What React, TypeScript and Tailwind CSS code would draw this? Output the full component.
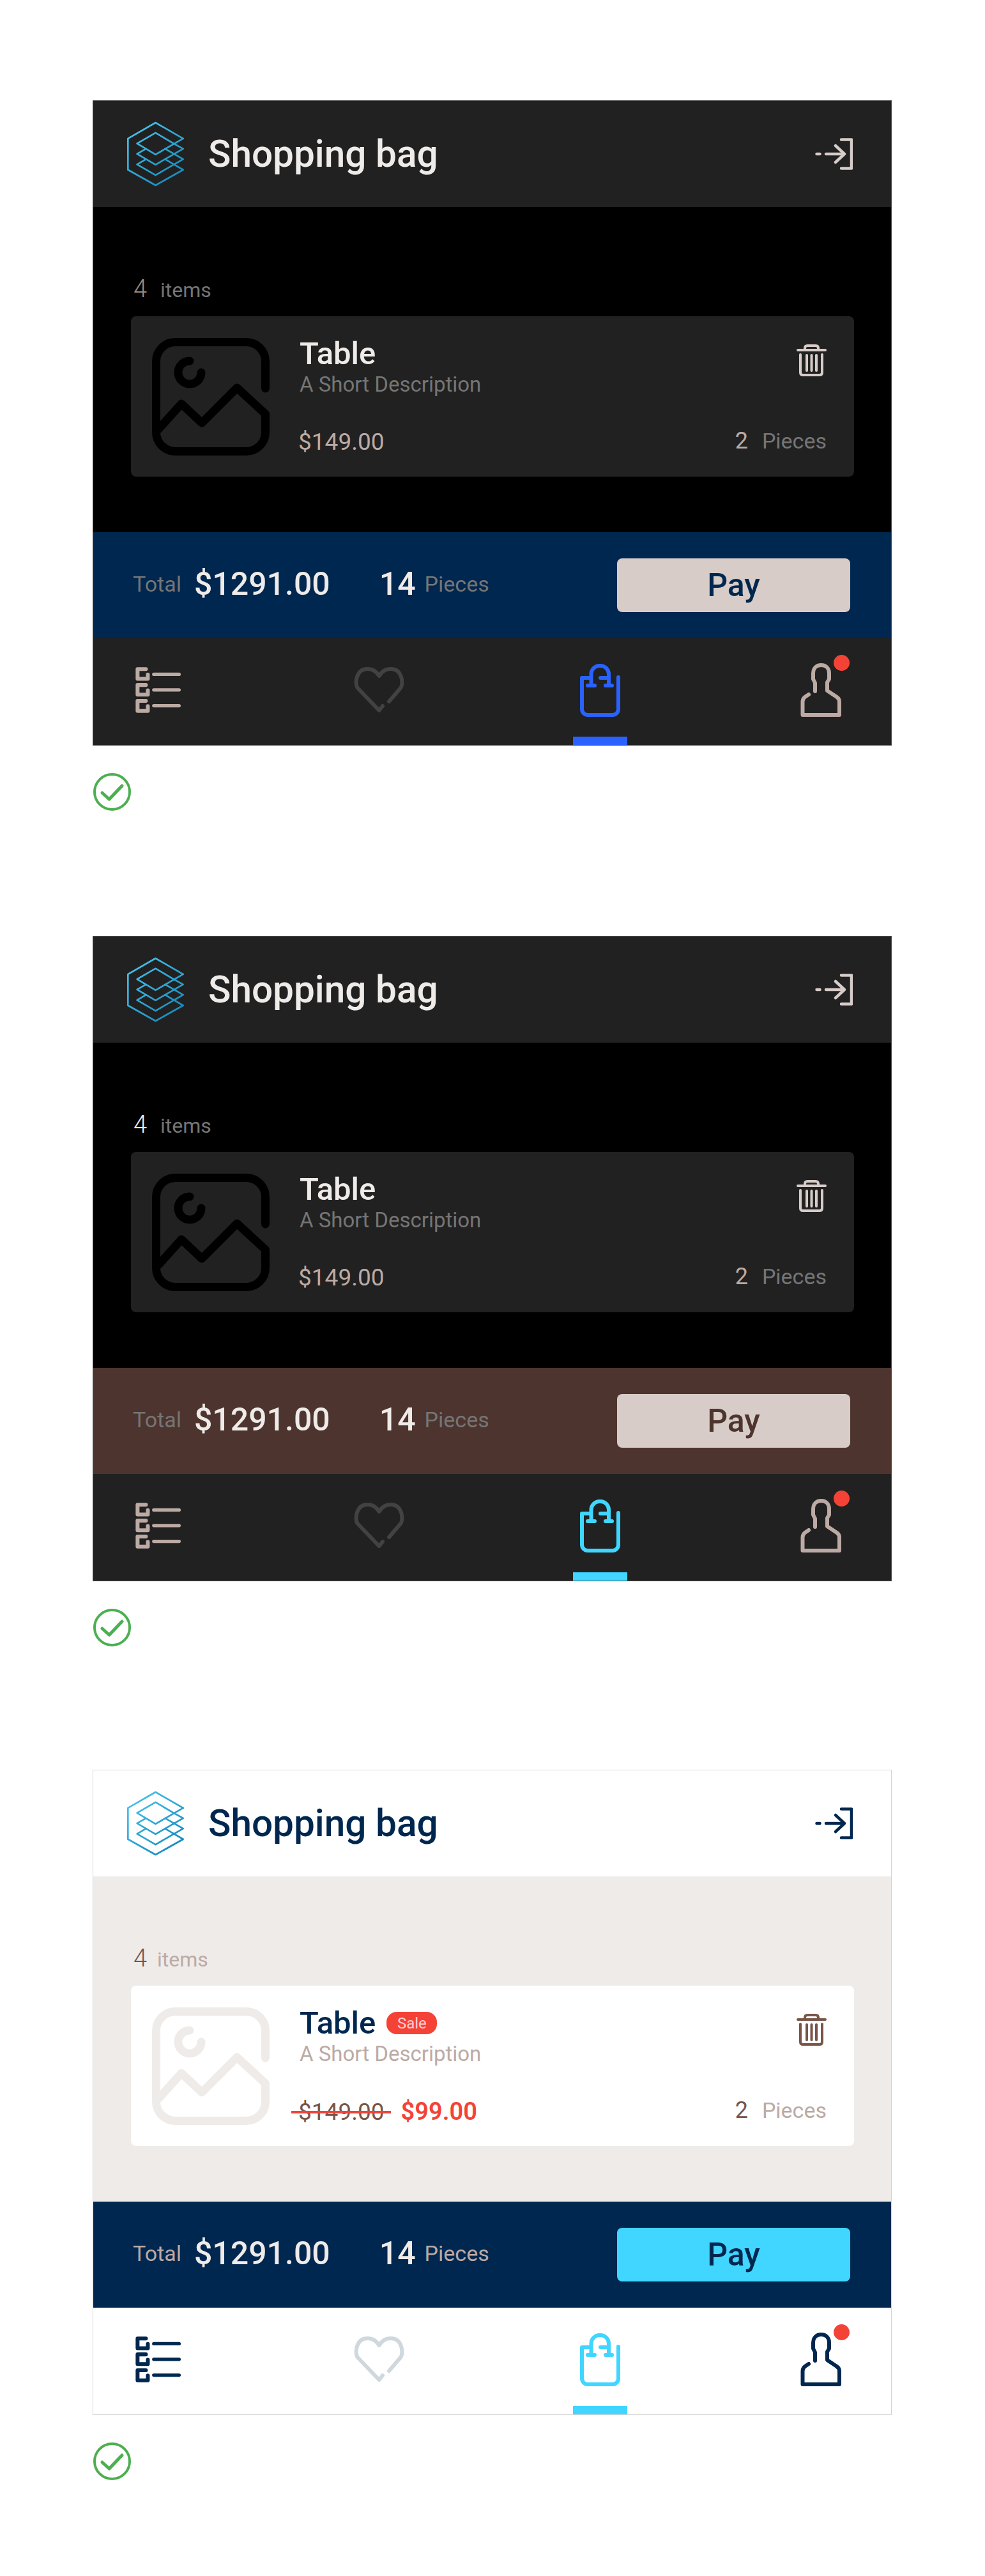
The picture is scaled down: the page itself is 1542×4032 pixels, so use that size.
import { useId } from "react"

type Theme = {
  panel: string
  header: string
  title: string
  exit: string
  body: string
  count: string
  items: string
  card: string
  placeholder: string
  name: string
  desc: string
  price: string
  qty: string
  pieces: string
  trash: string
  footer: string
  totalLabel: string
  payBg: string
  payText: string
  nav: string
  list: string
  heart: string
  bag: string
  user: string
  itemsGap: string
  sale?: boolean
}

const themes: Theme[] = [
  {
    panel: "border-[#4a4a4a]",
    header: "bg-[#212121]",
    title: "text-[#efebe9]",
    exit: "#d7ccc8",
    body: "bg-black",
    count: "text-[#a1887f]",
    items: "text-[#757575]",
    card: "bg-[#212121]",
    placeholder: "#000000",
    name: "text-[#efebe9]",
    desc: "text-[#757575]",
    price: "text-[#bcaaa4]",
    qty: "text-[#bcaaa4]",
    pieces: "text-[#757575]",
    trash: "#d7ccc8",
    footer: "bg-[#00274f]",
    totalLabel: "text-[#757575]",
    payBg: "bg-[#d7ccc8]",
    payText: "text-[#00274f]",
    nav: "bg-[#212121]",
    list: "#bcaaa4",
    heart: "#424242",
    bag: "#2962ff",
    user: "#bcaaa4",
    itemsGap: "ml-[21px]",
  },
  {
    panel: "border-[#4a4a4a]",
    header: "bg-[#212121]",
    title: "text-[#efebe9]",
    exit: "#d7ccc8",
    body: "bg-black",
    count: "text-[#efebe9]",
    items: "text-[#757575]",
    card: "bg-[#212121]",
    placeholder: "#000000",
    name: "text-[#efebe9]",
    desc: "text-[#757575]",
    price: "text-[#bcaaa4]",
    qty: "text-[#bcaaa4]",
    pieces: "text-[#757575]",
    trash: "#d7ccc8",
    footer: "bg-[#4e342e]",
    totalLabel: "text-[#757575]",
    payBg: "bg-[#d7ccc8]",
    payText: "text-[#4e342e]",
    nav: "bg-[#212121]",
    list: "#bcaaa4",
    heart: "#424242",
    bag: "#40d6ff",
    user: "#bcaaa4",
    itemsGap: "ml-[21px]",
  },
  {
    panel: "border-[#d4d4d4]",
    header: "bg-white",
    title: "text-[#00274f]",
    exit: "#00274f",
    body: "bg-[#efebe9]",
    count: "text-[#795548]",
    items: "text-[#bcaaa4]",
    card: "bg-white",
    placeholder: "#efebe9",
    name: "text-[#00274f]",
    desc: "text-[#bcaaa4]",
    price: "text-[#795548]",
    qty: "text-[#795548]",
    pieces: "text-[#bcaaa4]",
    trash: "#795548",
    footer: "bg-[#00274f]",
    totalLabel: "text-[#bcaaa4]",
    payBg: "bg-[#40d6ff]",
    payText: "text-[#00274f]",
    nav: "bg-white",
    list: "#00274f",
    heart: "#cfd8dc",
    bag: "#40d6ff",
    user: "#00274f",
    itemsGap: "ml-[16px]",
    sale: true,
  },
]

function Logo() {
  const id = useId()
  return (
    <svg width="87" height="98" viewBox="60 65 260 295" fill="none" className="overflow-visible shrink-0">
      <defs>
        <linearGradient id={id} gradientUnits="userSpaceOnUse" x1="60" y1="65" x2="320" y2="360">
          <stop offset="0" stopColor="#4fc8ee" />
          <stop offset="1" stopColor="#0f83b8" />
        </linearGradient>
      </defs>
      <g stroke={`url(#${id})`} strokeWidth="8" strokeLinejoin="round" strokeLinecap="round">
        <path d="M320 140 190 65 60 140V287L190 360 320 287 277 262" />
        <path d="M320 140 190 215 103 163 190 113 275 163 320 188 190 263 103 212 145 188" />
        <path d="M235 188 320 237 190 312 103 262 145 237" />
        <path d="M235 237 277 262" />
      </g>
    </svg>
  )
}

function ExitIcon({ color }: { color: string }) {
  return (
    <svg width="59" height="50" viewBox="0 0 59 50" fill="none" stroke={color} strokeWidth="4.5" strokeLinecap="round" strokeLinejoin="round">
      <path d="M41 2.5H57V47.5H41" />
      <path d="M17 25H45M32 12 46 25 32 38" />
      <path d="M2.5 25H7.5" />
    </svg>
  )
}

function ImagePlaceholder({ color }: { color: string }) {
  return (
    <svg width="184" height="184" viewBox="0 0 184 184" fill="none" stroke={color} strokeWidth="13" strokeLinecap="round" strokeLinejoin="round" className="shrink-0">
      <path d="M177.5 79V36.5A30 30 0 0 0 147.5 6.5H36.5A30 30 0 0 0 6.5 36.5V147.5A30 30 0 0 0 36.5 177.5H147.5A30 30 0 0 0 177.5 147.5V119L133 78 78 133 46 103 10 143" />
      <path d="M59 36A18 18 0 1 0 77 54" />
    </svg>
  )
}

function TrashIcon({ color }: { color: string }) {
  return (
    <svg width="47" height="50" viewBox="0 0 47 50" fill="none" stroke={color} strokeWidth="4" strokeLinecap="round" strokeLinejoin="round" className="shrink-0">
      <path d="M2 9H45" />
      <path d="M13 9V6Q13 2 17 2H30Q34 2 34 6V9" />
      <path d="M6 16V44Q6 48 10 48H36Q40 48 40 44V16" />
      <path d="M16 17V41M23.5 17V41M31 17V41" />
    </svg>
  )
}

function ListIcon({ color }: { color: string }) {
  return (
    <svg width="71" height="72" viewBox="63 73 212 215" fill="none" stroke={color} strokeLinecap="round" strokeLinejoin="round">
      <g strokeWidth="18">
        <path d="M112 83H73V128H121V108" />
        <path d="M112 157H73V202H121V182" />
        <path d="M112 231H73V278H121V256" />
      </g>
      <g strokeWidth="16">
        <path d="M149 107H267M149 180H267M149 254H267" />
      </g>
    </svg>
  )
}

function HeartIcon({ color }: { color: string }) {
  return (
    <svg width="79" height="71" viewBox="0 0 79 71" fill="none" stroke={color} strokeWidth="6" strokeLinecap="round" strokeLinejoin="round">
      <path d="M55 54 73 33C78 27 76 3 58 3 49 3 43 8 39.5 14 36 8 30 3 21 3 3 3 1 27 6 33L39.5 68 45 61" />
    </svg>
  )
}

function BagIcon({ color }: { color: string }) {
  return (
    <svg width="63" height="84" viewBox="0 0 63 84" fill="none" stroke={color} strokeWidth="6" strokeLinecap="round" strokeLinejoin="round">
      <path d="M15 23H3V72A9 9 0 0 0 12 81H51A9 9 0 0 0 60 72V22" />
      <path d="M17.5 35V17A13 13 0 0 1 30.5 4H32A13 13 0 0 1 45 17V35" />
      <path d="M12 35H23M40 35H50M32 23H45" />
    </svg>
  )
}

function UserIcon({ color }: { color: string }) {
  return (
    <svg width="64" height="84" viewBox="0 0 64 84" fill="none" stroke={color} strokeWidth="6" strokeLinecap="round" strokeLinejoin="round">
      <path d="M13 49 7 53Q3.5 56 3.5 60V81H61V60Q61 56 57 53L42 43V30L45 25V16C45 8 40 3 32.5 3 25 3 20 8 20 16V25L23 31V44" />
    </svg>
  )
}

function CheckIcon() {
  return (
    <svg width="59" height="59" viewBox="0 0 59 59" fill="none" stroke="#4caf50" strokeLinecap="round" strokeLinejoin="round">
      <circle cx="29.5" cy="29.5" r="27.5" strokeWidth="4" />
      <path d="M14 31 25 41 45 20" strokeWidth="5" />
    </svg>
  )
}

function NavItem({ active, children }: { active?: string; children: React.ReactNode }) {
  return (
    <div className="relative w-[85px] h-full flex items-center justify-center pb-[6px]">
      {children}
      {active && <div className="absolute left-0 right-0 bottom-0 h-[13px]" style={{ backgroundColor: active }} />}
    </div>
  )
}

function Panel({ t }: { t: Theme }) {
  return (
    <div className="last:-mt-[3px]">
      <div className={`w-[1251px] h-[1010px] border flex flex-col ${t.panel}`}>
        {/* Header */}
        <div className={`h-[166px] shrink-0 flex items-center justify-between pl-[54px] pr-[60px] ${t.header}`}>
          <div className="flex items-center gap-[39px]">
            <Logo />
            <span className={`text-[58.5px] leading-none font-medium ${t.title}`}>Shopping bag</span>
          </div>
          <ExitIcon color={t.exit} />
        </div>

        {/* Bag items */}
        <div className={`h-[509px] shrink-0 flex flex-col justify-end pl-[59px] pr-[58px] pb-[87px] ${t.body}`}>
          <div className="flex items-baseline pl-[4px] mb-[24px]">
            <span className={`text-[38px] leading-none font-light ${t.count}`}>4</span>
            <span className={`text-[32px] leading-none ${t.itemsGap} ${t.items}`}>items</span>
          </div>
          <div className={`h-[251px] rounded-[8px] flex items-center pl-[33px] pr-[43px] ${t.card}`}>
            <ImagePlaceholder color={t.placeholder} />
            <div className="ml-[47px] flex-1 h-full flex flex-col pt-[32px] pb-[35px]">
              <div className="flex items-start justify-between">
                <div>
                  <div className="flex items-center gap-[17px] h-[52px]">
                    <span className={`text-[49px] leading-none font-medium ${t.name}`}>Table</span>
                    {t.sale && (
                      <span className="w-[79px] h-[35px] rounded-[16px] bg-[#f44336] text-[#ffcdd2] text-[24px] leading-none flex items-center justify-center mt-[1px]">
                        Sale
                      </span>
                    )}
                  </div>
                  <p className={`text-[33px] leading-none mt-[6px] ${t.desc}`}>A Short Description</p>
                </div>
                <div className="mt-[12px]">
                  <TrashIcon color={t.trash} />
                </div>
              </div>
              <div className="mt-auto flex items-center justify-between">
                <div className="flex items-baseline -ml-[2px]">
                  <span className={`relative text-[37px] leading-none ${t.price}`}>
                    $149.00
                    {t.sale && <span className="absolute left-[-11px] right-[-10px] top-[17px] h-[4px] bg-[#f44336]" />}
                  </span>
                  {t.sale && <span className="ml-[26px] text-[38px] leading-none font-semibold text-[#f44336]">$99.00</span>}
                </div>
                <div className="flex items-baseline mb-[3px]">
                  <span className={`text-[36px] leading-none ${t.qty}`}>2</span>
                  <span className={`ml-[22px] text-[34px] leading-none ${t.pieces}`}>Pieces</span>
                </div>
              </div>
            </div>
          </div>
        </div>

        {/* Total */}
        <div className={`h-[166px] shrink-0 flex items-center justify-between pl-[62px] pr-[64px] ${t.footer}`}>
          <div className="flex items-center pb-[5px]">
            <span className={`text-[34px] leading-none ${t.totalLabel}`}>Total</span>
            <span className="ml-[20px] text-[50px] leading-none font-medium text-[#efebe9]">$1291.00</span>
            <span className="ml-[77px] text-[50px] leading-none font-medium text-[#efebe9]">14</span>
            <span className={`ml-[14px] text-[34px] leading-none ${t.totalLabel}`}>Pieces</span>
          </div>
          <button className={`w-[365px] h-[84px] rounded-[8px] text-[50px] leading-none font-medium ${t.payBg} ${t.payText}`}>Pay</button>
        </div>

        {/* Nav */}
        <div className={`flex-1 flex gap-[261px] pl-[58.5px] ${t.nav}`}>
          <NavItem>
            <ListIcon color={t.list} />
          </NavItem>
          <NavItem>
            <HeartIcon color={t.heart} />
          </NavItem>
          <NavItem active={t.bag}>
            <BagIcon color={t.bag} />
          </NavItem>
          <NavItem>
            <div className="relative">
              <UserIcon color={t.user} />
              <span className="absolute left-[52px] top-[-13px] w-[25px] h-[25px] rounded-full bg-[#f44336]" />
            </div>
          </NavItem>
        </div>
      </div>
      <div className="mt-[43px] ml-[1px]">
        <CheckIcon />
      </div>
    </div>
  )
}

export default function App() {
  return (
    <div className="min-h-[4032px] bg-white pl-[145px] pt-[157px] font-['Roboto',sans-serif] flex flex-col gap-[196px]">
      {themes.map((t, i) => (
        <Panel key={i} t={t} />
      ))}
    </div>
  )
}
